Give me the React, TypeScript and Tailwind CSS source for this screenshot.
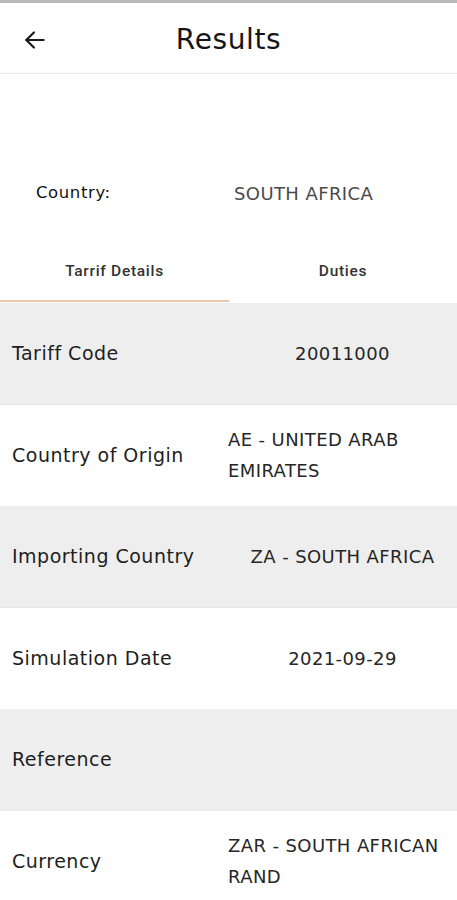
import React from "react";

// --- Datos de la tabla ---
const rows: { label: string; value: string }[] = [
  { label: "Tariff Code", value: "20011000" },
  { label: "Country of Origin", value: "AE - UNITED ARAB EMIRATES" },
  { label: "Importing Country", value: "ZA - SOUTH AFRICA" },
  { label: "Simulation Date", value: "2021-09-29" },
  { label: "Reference", value: "" },
  { label: "Currency", value: "ZAR - SOUTH AFRICAN RAND" },
];

const sans = "font-['DejaVu_Sans',sans-serif]";

export default function App() {
  return (
    <div className={`w-[457px] h-[900px] overflow-hidden bg-white ${sans}`}>
      {/* Barra superior */}
      <div className="h-[3px] bg-[#b8b8b8]" />

      {/* Encabezado */}
      <header className="relative flex h-[71px] items-center justify-center border-b border-[#ececec]">
        <button className="absolute left-[22px] top-[24px] text-[#1a1a1a]">
          <svg width="26" height="26" viewBox="0 0 24 24" fill="none" stroke="currentColor" strokeWidth="2" strokeLinecap="round" strokeLinejoin="round">
            <path d="M20 12H4" />
            <path d="M11 5l-7 7 7 7" />
          </svg>
        </button>
        <h1 className="pt-[4px] text-[28px] leading-none tracking-[0.6px] text-[#151515]">Results</h1>
      </header>

      {/* País */}
      <div className="h-[171px] pt-[106px]">
        <div className="flex items-center">
          <span className="w-[234px] pl-[36px] text-[16.5px] tracking-[0.6px] text-[#111]">Country:</span>
          <span className="text-[18px] tracking-[0.4px] text-[#4a4a4a]">SOUTH AFRICA</span>
        </div>
      </div>

      {/* Pestañas */}
      <div className="flex h-[57px] font-['Roboto',sans-serif] text-[15.5px] font-medium tracking-[0.7px] text-[#333]">
        <div className="flex w-[229px] items-center justify-center border-b-2 border-[#ecc9a8] pb-[2px]">
          Tarrif Details
        </div>
        <div className="flex flex-1 items-center justify-center pb-[4px]">Duties</div>
      </div>

      {/* Filas */}
      <div className="pt-[1px]">
        {rows.map((r, i) => (
          <div
            key={r.label}
            className={`flex h-[101.5px] items-center ${i % 2 === 0 ? "border-b border-[#e7e7e7] bg-[#eeeeee]" : "bg-white"}`}
          >
            <div className="w-[228px] pl-[12px] text-[19px] tracking-[0.5px] text-[#1e1e1e]">{r.label}</div>
            <div className="flex flex-1 justify-center">
              <div className="text-left text-[18px] leading-[31px] tracking-[0.4px] text-[#262626]">{r.value}</div>
            </div>
          </div>
        ))}
      </div>
    </div>
  );
}
